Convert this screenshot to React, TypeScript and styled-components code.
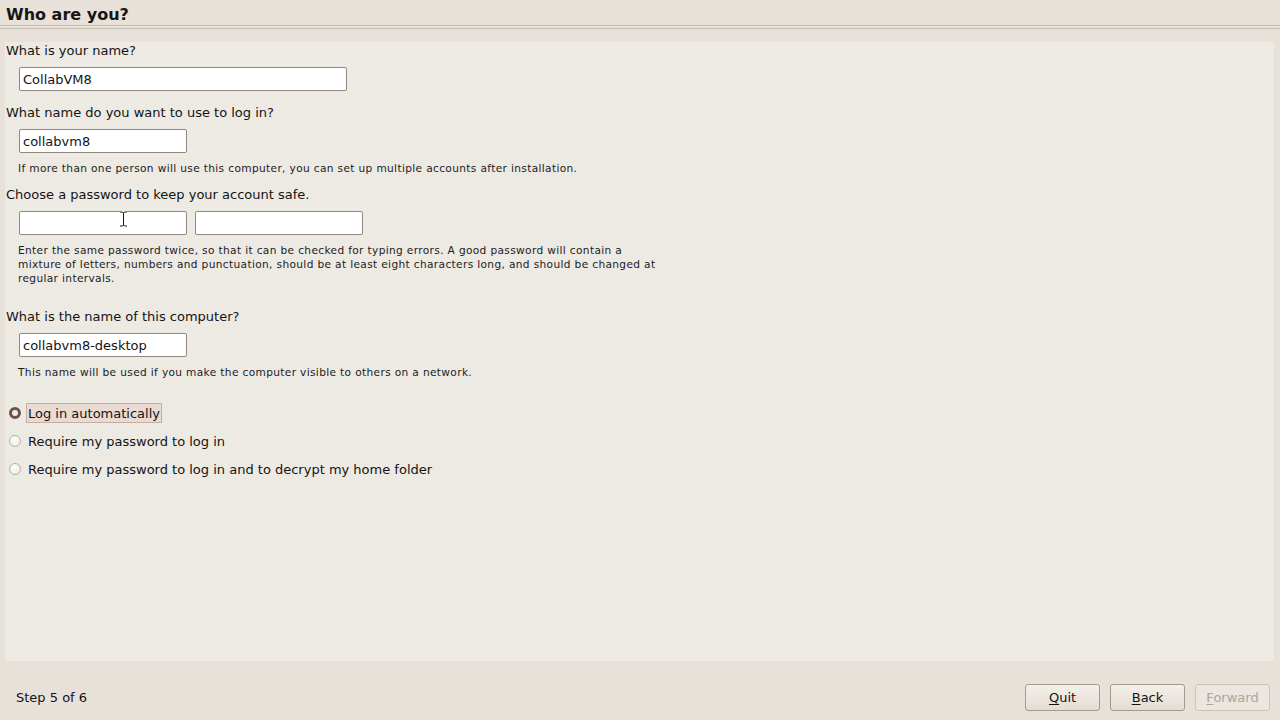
import { type ReactElement } from 'react';
import styled, { createGlobalStyle } from 'styled-components';

const GlobalStyle = createGlobalStyle`
  html, body {
    margin: 0;
    padding: 0;
    height: 100%;
  }
  body {
    font-family: "DejaVu Sans", "Liberation Sans", sans-serif;
    color: #141414;
    background: #e7e1d9;
  }
`;

const Window = styled.div`
  display: flex;
  flex-direction: column;
  width: 1280px;
  height: 720px;
  background: #e7e1d9;
  overflow: hidden;
`;

const Header = styled.div`
  padding: 5px 6px 0 6px;
`;

const Title = styled.h1`
  margin: 0;
  font-size: 16px;
  font-weight: bold;
  line-height: 20px;
  color: #161616;
`;

const Separator = styled.div`
  height: 2px;
  border-top: 1px solid #c6bdb2;
  border-bottom: 1px solid #c6bdb2;
  margin: 0 -6px;
`;

const Panel = styled.div`
  flex: 1;
  margin: 13px 6px 0 5px;
  padding: 1px 1px 0 1px;
  background: #edeae4;
  display: flex;
  flex-direction: column;
  align-items: flex-start;
`;

const Label = styled.div<{ $gap: number }>`
  margin-top: ${(p) => p.$gap}px;
  font-size: 13px;
  line-height: 16px;
  color: #141414;
`;

const FieldRow = styled.div`
  display: flex;
  gap: 8px;
  margin: 8px 0 0 13px;
`;

const FieldWrap = styled.div`
  position: relative;
`;

const TextField = styled.input<{ $width: number }>`
  box-sizing: border-box;
  width: ${(p) => p.$width}px;
  height: 24px;
  padding: 0 3px;
  border: 1px solid #8e887f;
  border-radius: 2px;
  background: #ffffff;
  font-family: "DejaVu Sans", "Liberation Sans", sans-serif;
  font-size: 13px;
  color: #141414;
  outline: none;
`;

const Cursor = styled.svg`
  position: absolute;
  left: 100px;
  top: 0px;
  width: 9px;
  height: 16px;
`;

const Help = styled.p`
  margin: 8px 0 0 12px;
  width: 645px;
  font-size: 10.6px;
  letter-spacing: 0.35px;
  line-height: 14px;
  color: #1c1c1c;
`;

const Options = styled.div`
  margin-top: 24px;
  display: flex;
  flex-direction: column;
  gap: 8px;
`;

const OptionRow = styled.label`
  display: flex;
  align-items: center;
  height: 20px;
`;

const Radio = styled.span<{ $checked?: boolean }>`
  box-sizing: border-box;
  width: 12px;
  height: 12px;
  margin: 0 7px 0 3px;
  border-radius: 50%;
  border: ${(p) => (p.$checked ? '3px solid #6e5148' : '1px solid #b8b1a8')};
  background: ${(p) => (p.$checked ? '#f4eeea' : 'radial-gradient(circle at 40% 35%, #ffffff, #ebe7e1)')};
`;

const OptionText = styled.span<{ $focused?: boolean }>`
  box-sizing: border-box;
  height: 20px;
  display: flex;
  align-items: center;
  margin-left: ${(p) => (p.$focused ? '-2px' : '0')};
  padding: ${(p) => (p.$focused ? '0 1px' : '0')};
  font-size: 13px;
  color: #141414;
  border: ${(p) => (p.$focused ? '1px solid #c8aea2' : 'none')};
  background: ${(p) => (p.$focused ? '#eadbd2' : 'transparent')};
`;

const Footer = styled.div`
  height: 59px;
  box-sizing: border-box;
  display: flex;
  align-items: flex-start;
  padding: 23px 10px 0 16px;
`;

const StepText = styled.span`
  flex: 1;
  font-size: 13px;
  line-height: 27px;
  color: #141414;
`;

const Buttons = styled.div`
  display: flex;
  gap: 10px;
`;

const Button = styled.button<{ $disabled?: boolean }>`
  box-sizing: border-box;
  width: 75px;
  height: 27px;
  border: 1px solid ${(p) => (p.$disabled ? '#cbc4ba' : '#a39b90')};
  border-radius: 3px;
  background: ${(p) =>
    p.$disabled ? '#ebe6df' : 'linear-gradient(#f3f0eb, #e4ddd3)'};
  font-family: "DejaVu Sans", "Liberation Sans", sans-serif;
  font-size: 13px;
  color: ${(p) => (p.$disabled ? '#aaa59d' : '#141414')};
  padding: 0;
  u {
    text-underline-offset: 2px;
  }
`;

export default function App(): ReactElement {
  return (
    <Window>
      <GlobalStyle />
      <Header>
        <Title>Who are you?</Title>
        <Separator />
      </Header>
      <Panel>
        <Label $gap={0}>What is your name?</Label>
        <FieldRow>
          <TextField $width={328} defaultValue="CollabVM8" />
        </FieldRow>

        <Label $gap={14}>What name do you want to use to log in?</Label>
        <FieldRow>
          <TextField $width={168} defaultValue="collabvm8" />
        </FieldRow>
        <Help>If more than one person will use this computer, you can set up multiple accounts after installation.</Help>

        <Label $gap={12}>Choose a password to keep your account safe.</Label>
        <FieldRow>
          <FieldWrap>
            <TextField $width={168} type="password" />
            <Cursor viewBox="0 0 9 16">
              <path d="M1 1 H3.5 L4.5 2 L5.5 1 H8 M4.5 2 V14 M1 15 H3.5 L4.5 14 L5.5 15 H8" fill="none" stroke="#ffffff" strokeWidth="2.4" />
              <path d="M1 1 H3.5 L4.5 2 L5.5 1 H8 M4.5 2 V14 M1 15 H3.5 L4.5 14 L5.5 15 H8" fill="none" stroke="#111111" strokeWidth="1" />
            </Cursor>
          </FieldWrap>
          <TextField $width={168} type="password" />
        </FieldRow>
        <Help>
          Enter the same password twice, so that it can be checked for typing errors. A good password will contain a mixture of letters, numbers and punctuation, should be at least eight characters long, and should be changed at regular intervals.
        </Help>

        <Label $gap={24}>What is the name of this computer?</Label>
        <FieldRow>
          <TextField $width={168} defaultValue="collabvm8-desktop" />
        </FieldRow>
        <Help>This name will be used if you make the computer visible to others on a network.</Help>

        <Options>
          <OptionRow>
            <Radio $checked />
            <OptionText $focused>Log in automatically</OptionText>
          </OptionRow>
          <OptionRow>
            <Radio />
            <OptionText>Require my password to log in</OptionText>
          </OptionRow>
          <OptionRow>
            <Radio />
            <OptionText>Require my password to log in and to decrypt my home folder</OptionText>
          </OptionRow>
        </Options>
      </Panel>
      <Footer>
        <StepText>Step 5 of 6</StepText>
        <Buttons>
          <Button><u>Q</u>uit</Button>
          <Button><u>B</u>ack</Button>
          <Button $disabled><u>F</u>orward</Button>
        </Buttons>
      </Footer>
    </Window>
  );
}
